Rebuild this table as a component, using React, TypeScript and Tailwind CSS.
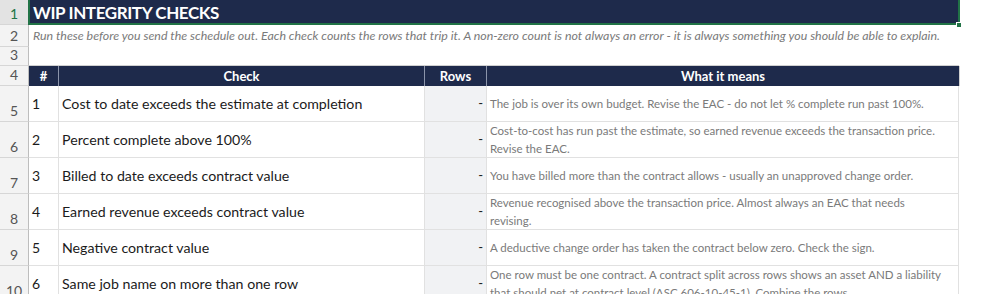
import React from 'react';

const checks = [
  {
    n: 1,
    check: 'Cost to date exceeds the estimate at completion',
    means: ['The job is over its own budget. Revise the EAC - do not let % complete run past 100%.'],
  },
  {
    n: 2,
    check: 'Percent complete above 100%',
    means: ['Cost-to-cost has run past the estimate, so earned revenue exceeds the transaction price.', 'Revise the EAC.'],
  },
  {
    n: 3,
    check: 'Billed to date exceeds contract value',
    means: ['You have billed more than the contract allows - usually an unapproved change order.'],
  },
  {
    n: 4,
    check: 'Earned revenue exceeds contract value',
    means: ['Revenue recognised above the transaction price. Almost always an EAC that needs', 'revising.'],
  },
  {
    n: 5,
    check: 'Negative contract value',
    means: ['A deductive change order has taken the contract below zero. Check the sign.'],
  },
  {
    n: 6,
    check: 'Same job name on more than one row',
    means: [
      'One row must be one contract. A contract split across rows shows an asset AND a liability',
      'that should net at contract level (ASC 606-10-45-1). Combine the rows.',
    ],
  },
];

const font = { fontFamily: 'Lato, "Open Sans", sans-serif' };

const RowHead = ({ n, active }: { n: number; active?: boolean }) => (
  <div
    className={`w-[29px] shrink-0 flex items-end justify-center border-r border-b border-r-[#bdbdbd] border-b-[#d6d6d6] text-[14px] leading-none ${
      active ? 'bg-[#e3e3e3] text-[#217346]' : 'bg-[#f3f3f3] text-[#555]'
    }`}
  >
    <span className="pb-[3px]">{n}</span>
  </div>
);

const App = () => {
  return (
    <div className="w-[1005px] h-[294px] overflow-hidden bg-white relative" style={font}>
      {/* row 1 - title */}
      <div className="flex h-[25px]">
        <RowHead n={1} active />
        <div className="w-[930px] shrink-0 bg-[#1e2a4b] flex items-center pl-[4px] border-b border-[#1e2a4b]">
          <span className="text-white font-bold text-[17px] leading-none tracking-[-0.4px]">WIP INTEGRITY CHECKS</span>
        </div>
        <div className="flex-1" />
      </div>

      {/* row 2 - note */}
      <div className="flex h-[22px]">
        <RowHead n={2} />
        <div className="flex-1 flex items-center pl-[4px] whitespace-nowrap">
          <span className="italic text-[12.4px] text-[#7a7a7a]">
            Run these before you send the schedule out. Each check counts the rows that trip it. A non-zero count is not always an error - it is always something you should be able to explain.
          </span>
        </div>
      </div>

      {/* row 3 */}
      <div className="flex h-[19px]">
        <RowHead n={3} />
        <div className="w-[930px] shrink-0 border-b border-[#d0d0d0]" />
      </div>

      {/* row 4 - header */}
      <div className="flex h-[20px]">
        <RowHead n={4} />
        <div className="flex bg-[#1e2a4b] text-white font-bold text-[13px] leading-none">
          <div className="w-[30px] flex items-center justify-center border-r border-[#8b94aa]">#</div>
          <div className="w-[366px] flex items-center justify-center border-r border-[#8b94aa]">Check</div>
          <div className="w-[62px] flex items-center justify-center border-r border-[#8b94aa]">Rows</div>
          <div className="w-[472px] flex items-center justify-center">What it means</div>
        </div>
        <div className="w-px bg-[#d0d0d0]" />
      </div>

      {/* data rows */}
      {checks.map((c, i) => (
        <div key={c.n} className="flex h-[36px]">
          <RowHead n={i + 5} />
          <div className="flex text-[#1b1b1b]">
            <div className="w-[30px] flex items-center pl-[3px] text-[14px] border-r border-b border-[#e1e1e1]">
              {c.n}
            </div>
            <div className="w-[366px] flex items-center pl-[3px] text-[14.2px] border-r border-b border-[#e1e1e1] whitespace-nowrap">
              {c.check}
            </div>
            <div className="w-[62px] flex items-center justify-end pr-[3px] text-[13px] bg-[#f1f2f4] border-r border-b border-[#e1e1e1]">
              -
            </div>
            <div className="w-[472px] flex flex-col justify-center pl-[3px] text-[11.5px] leading-[18px] text-[#7a7a7a] border-r border-b border-[#e1e1e1] whitespace-nowrap overflow-hidden">
              {c.means.map((line) => (
                <span key={line}>{line}</span>
              ))}
            </div>
          </div>
        </div>
      ))}

      {/* selection outline on the title cell */}
      <div className="absolute left-[28px] top-[-2px] w-[932px] h-[27px] border-2 border-[#217346] pointer-events-none" />
      <div className="absolute left-[956px] top-[22px] w-[6px] h-[6px] bg-[#217346] border border-white pointer-events-none" />
    </div>
  );
};

export default App;
